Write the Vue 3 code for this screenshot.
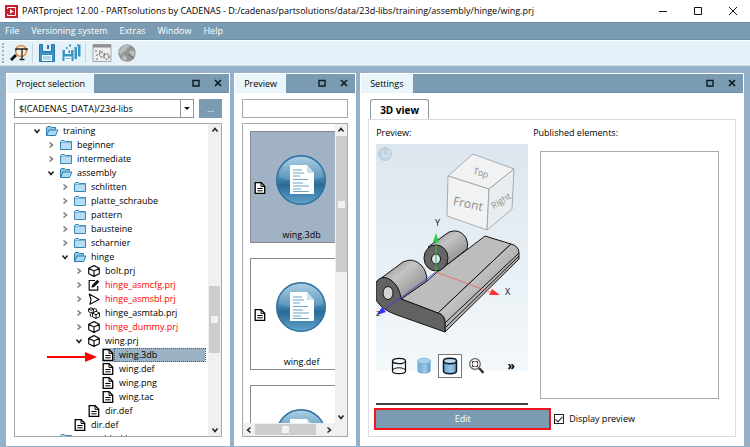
<script setup>
import { ref } from 'vue'

const menus = ['File', 'Versioning system', 'Extras', 'Window', 'Help']
const library = ref('$(CADENAS_DATA)/23d-libs')
const filter = ref('')
const showPreview = ref(true)

const rows = [
  { level: 0, icon: 'open', state: 'open', text: 'training' },
  { level: 1, icon: 'folder', state: 'closed', text: 'beginner' },
  { level: 1, icon: 'folder', state: 'closed', text: 'intermediate' },
  { level: 1, icon: 'open', state: 'open', text: 'assembly' },
  { level: 2, icon: 'folder', state: 'closed', text: 'schlitten' },
  { level: 2, icon: 'folder', state: 'closed', text: 'platte_schraube' },
  { level: 2, icon: 'folder', state: 'closed', text: 'pattern' },
  { level: 2, icon: 'folder', state: 'closed', text: 'bausteine' },
  { level: 2, icon: 'folder', state: 'closed', text: 'scharnier' },
  { level: 2, icon: 'open', state: 'open', text: 'hinge' },
  { level: 3, icon: 'cube', state: 'closed', text: 'bolt.prj' },
  { level: 3, icon: 'edit', state: 'closed', text: 'hinge_asmcfg.prj', red: true },
  { level: 3, icon: 'play', state: 'closed', text: 'hinge_asmsbl.prj', red: true },
  { level: 3, icon: 'cubes', state: 'closed', text: 'hinge_asmtab.prj' },
  { level: 3, icon: 'cube', state: 'closed', text: 'hinge_dummy.prj', red: true },
  { level: 3, icon: 'cube', state: 'open', text: 'wing.prj' },
  { level: 4, icon: 'file', text: 'wing.3db', selected: true },
  { level: 4, icon: 'file', text: 'wing.def' },
  { level: 4, icon: 'file', text: 'wing.png' },
  { level: 4, icon: 'file', text: 'wing.tac' },
  { level: 3, icon: 'file', text: 'dir.def' },
  { level: 2, icon: 'file', text: 'dir.def' },
  { level: 1, icon: 'folder', state: 'closed', text: 'assembly_kb' }
]

const files = [
  { name: 'wing.3db', selected: true },
  { name: 'wing.def' },
  { name: '' }
]
</script>

<template>
  <svg class="sprite" aria-hidden="true">
    <defs>
      <linearGradient id="ball" x1="0" y1="0" x2="0" y2="1">
        <stop offset="0" stop-color="#a3cbe2" />
        <stop offset=".45" stop-color="#4b8bb4" />
        <stop offset=".6" stop-color="#2c6a98" />
        <stop offset="1" stop-color="#5fa5cd" />
      </linearGradient>
      <linearGradient id="blueCyl" x1="0" y1="0" x2="1" y2="0">
        <stop offset="0" stop-color="#6aa5cf" />
        <stop offset=".6" stop-color="#9cc9e8" />
        <stop offset="1" stop-color="#5d97c0" />
      </linearGradient>
      <linearGradient id="steel" x1="0" y1="0" x2="1" y2="1">
        <stop offset="0" stop-color="#828282" />
        <stop offset=".4" stop-color="#c4c4c4" />
        <stop offset="1" stop-color="#7c7c7c" />
      </linearGradient>
      <symbol id="folder" viewBox="0 0 12 12">
        <path d="M.5 10.5v-8l1-1h3l1 1h6v8z" fill="#b5dcf2" stroke="#3a86b4" />
        <path d="M1 3.500h10" stroke="#7bb6d8" />
      </symbol>
      <symbol id="open" viewBox="0 0 12 12">
        <path d="M.5 10.500v-8l1-1h3l1 1h4v2" fill="#8cc5e5" stroke="#2b7caf" />
        <path d="M.5 10.500 3 5h9l-2.500 5.500z" fill="#a9d9f3" stroke="#2b7caf" />
      </symbol>
      <symbol id="cube" viewBox="0 0 12 12">
        <path d="M6 .6 11.300 3.200v5.600L6 11.400.7 8.800V3.200zM.7 3.200 6 6l5.300-2.800M6 6v5.400" fill="#fff" stroke="#111" stroke-width="1.2" stroke-linejoin="round" />
      </symbol>
      <symbol id="cubes" viewBox="0 0 12 12">
        <path d="M3 .7 5.500 2v2.700L3 6 .6 4.700V2zM.6 2 3 3.300 5.500 2" fill="#fff" stroke="#111" />
        <path d="M3.500 6.500 2 7.500l1 2.300M6 1.500l2.500.8v1.500" fill="none" stroke="#111" />
        <path d="M8 4.200 11.500 6v3.700L8 11.500 4.500 9.700V6zM4.500 6 8 7.800 11.500 6M8 7.800v3.700" fill="#fff" stroke="#111" />
      </symbol>
      <symbol id="edit" viewBox="0 0 12 12">
        <path d="M7 1.500H1.200v9.700h8.500V7" fill="#fff" stroke="#111" stroke-width="1.200" />
        <path d="m3.500 8.800.6-2.800L9.300.7l2.100 2L6.200 8z" fill="#111" />
      </symbol>
      <symbol id="play" viewBox="0 0 12 12">
        <path d="M1.200 1 11 6.500l-9 4.700 1-4.700z" fill="#fff" stroke="#111" stroke-width="1.200" stroke-linejoin="round" />
      </symbol>
      <symbol id="file" viewBox="0 0 12 12">
        <path d="M1.200.7h6l3.500 3.500v7.100H1.200z" fill="#fff" stroke="#000" stroke-width="1.300" />
        <path d="M7 .7v3.700h3.700M3.300 6.500h5.300M3.300 8.800h5.300" fill="none" stroke="#000" />
      </symbol>
      <symbol id="max" viewBox="0 0 8 8">
        <path d="M1 1.500h6V7H1z" fill="none" stroke="#0d1b25" stroke-width="1.400" />
      </symbol>
      <symbol id="x" viewBox="0 0 8 8">
        <path d="m1 1 6 6M7 1 1 7" stroke="#0d1b25" stroke-width="1.700" />
      </symbol>
      <symbol id="chev" viewBox="0 0 8 8">
        <path d="m1.500 2.500 2.500 3 2.500-3" fill="none" stroke="#222" stroke-width="1.500" />
      </symbol>
      <symbol id="badge" viewBox="0 0 50 50">
        <circle cx="25" cy="25" r="24.300" fill="url(#ball)" stroke="#2d6f9e" stroke-width="1.400" />
        <path d="M3 22a22 20 0 0 1 44 0q-22 9-44 0" fill="#fff" opacity=".13" />
        <path d="M14 10h17l7 8v21H14z" fill="#fdfeff" />
        <path d="M31 10v8h7z" fill="#cfe1ed" />
        <path d="M17 15h9M17 18h11M17 21h7M17 24.500h15M17 28h10M17 31h16M17 34h8M17 36.500h16" stroke="#6fa3c4" stroke-width="1" />
      </symbol>
      <symbol id="floppy" viewBox="0 0 16 18">
        <path d="M.5.5h3v7h9v-7h3v17H.5z" fill="#3c93c6" stroke="#2377a9" />
        <path d="M4 0h8v6.500H4z" fill="#dff0f9" />
        <path d="M8 1h2v4H8z" fill="#2377a9" />
        <path d="M3 11h10v6H3z" fill="#f3fafd" />
        <path d="M4 13h8M4 15h8" stroke="#7ab4d6" />
      </symbol>
    </defs>
  </svg>

  <div class="app">
    <header class="title">
      <svg class="logo" viewBox="0 0 13 13">
        <path d="M0 0h13v13H0z" fill="#c6202e" />
        <path d="M2.500 4V2.500h8v8h-8V9" fill="none" stroke="#fff" />
        <path d="M5 4.300 8.800 6.500 5 8.800z" fill="#fff" />
      </svg>
      <h1>PARTproject 12.00 - PARTsolutions by CADENAS - D:/cadenas/partsolutions/data/23d-libs/training/assembly/hinge/wing.prj</h1>
      <div class="winbtns">
        <button aria-label="Minimize"><svg viewBox="0 0 10 10"><path d="M1 5.500h8" stroke="#111" /></svg></button>
        <button aria-label="Maximize"><svg viewBox="0 0 10 10"><path d="M1.500 1.500h7v7h-7z" fill="none" stroke="#111" /></svg></button>
        <button aria-label="Close window"><svg viewBox="0 0 10 10"><path d="m1 1 8 8M9 1 1 9" stroke="#111" /></svg></button>
      </div>
    </header>

    <nav class="menu">
      <button v-for="m in menus" :key="m">{{ m }}</button>
    </nav>

    <div class="tools">
      <span class="grip"></span>
      <button aria-label="Search">
        <svg viewBox="0 0 18 18">
          <path d="m6 11-5 5" stroke="#111" stroke-width="3" />
          <circle cx="11" cy="7" r="5.500" fill="#f6ede2" stroke="#dd8f4b" stroke-width="1.500" />
          <path d="M6 6.500V5h11v1.500M12 5.500v10M9.500 15.500h5" fill="none" stroke="#222" stroke-width="1.300" />
        </svg>
      </button>
      <i class="sep"></i>
      <button class="slim" aria-label="Save"><svg viewBox="0 0 16 18"><use href="#floppy" /></svg></button>
      <button class="wide" aria-label="Save all">
        <svg viewBox="0 0 20 18">
          <path d="M8 .5h2v3h6v-3h3.500v12H8z" fill="#3c93c6" />
          <path d="M10 .5h6v3h-6z" fill="#dff0f9" />
          <path d="M4.500 2.500h2.500v3h6v-3h3.500v13h-12z" fill="#3c93c6" stroke="#e5f2f9" />
          <path d="M7.500 2.500h5v3h-5z" fill="#dff0f9" />
          <path d="M1 5.500h12v12H1z" fill="#3c93c6" stroke="#e5f2f9" />
          <path d="M4 6h6v4H4zM3.500 12.500h7V17h-7z" fill="#f3fafd" />
          <path d="M7.500 6.500h1.500v2.500H7.500z" fill="#2377a9" />
          <path d="M4.500 14.500h5" stroke="#7ab4d6" />
        </svg>
      </button>
      <i class="sep"></i>
      <button class="wide" aria-label="Tools">
        <svg viewBox="0 0 20 18">
          <path d="M1 .5h18v17H1z" fill="#eceeef" stroke="#a7a9aa" />
          <path d="M1 2h18" stroke="#8d8f90" stroke-width="3" />
          <path d="M3 7h2M4 12l2-2M4 15h2M8 6v3" stroke="#777" />
          <circle cx="10" cy="10.500" r="2.400" fill="none" stroke="#888" stroke-width="1.500" stroke-dasharray="2 1" />
          <circle cx="14.500" cy="12.500" r="2.600" fill="none" stroke="#888" stroke-width="1.500" stroke-dasharray="2 1" />
        </svg>
      </button>
      <button aria-label="Online">
        <svg viewBox="0 0 18 18">
          <circle cx="9" cy="9" r="8.700" fill="#939596" />
          <path d="M5 1.300 9 .5l3 2-3 1.500-1 3-3 1-2 3L.8 8zM12 6l4 1 1 3-3 5-3-4zM5 11l4 2-1 4-4-2z" fill="#b9bbbc" />
          <path d="M11 10q1.500 3 5 4" fill="none" stroke="#777" stroke-width="2" />
        </svg>
      </button>
    </div>

    <main class="desk">
      <section class="panel project">
        <div class="bar">
          <h2>Project selection</h2>
          <button aria-label="Float project selection"><svg><use href="#max" /></svg></button>
          <button aria-label="Close project selection"><svg><use href="#x" /></svg></button>
        </div>
        <div class="body">
          <div class="lib">
            <div class="combo">
              <select v-model="library" aria-label="Library"><option>$(CADENAS_DATA)/23d-libs</option></select>
              <span class="drop"></span>
            </div>
            <button class="more" aria-label="Browse">...</button>
          </div>
          <div class="box tree">
            <ul>
              <li v-for="(r, i) in rows" :key="i" :class="['l' + r.level, { red: r.red }]">
                <span class="tw"><svg v-if="r.state" :class="r.state"><use href="#chev" /></svg></span>
                <span class="node" :class="{ sel: r.selected }">
                  <svg class="ic"><use :href="'#' + r.icon" /></svg>
                  <span class="name">{{ r.text }}</span>
                </span>
                <svg v-if="r.selected" class="pointer" viewBox="0 0 50 12">
                  <path d="M0 6h40" stroke="#f00" stroke-width="2" />
                  <path d="m38 1 12 5-12 5z" fill="#f00" />
                </svg>
              </li>
            </ul>
            <div class="vbar">
              <svg class="up"><use href="#chev" /></svg>
              <span class="before"></span>
              <span class="thumb"></span>
              <span class="after"></span>
              <svg><use href="#chev" /></svg>
            </div>
          </div>
        </div>
      </section>

      <section class="panel files">
        <div class="bar">
          <h2>Preview</h2>
          <button aria-label="Float preview"><svg><use href="#max" /></svg></button>
          <button aria-label="Close preview"><svg><use href="#x" /></svg></button>
        </div>
        <div class="body">
          <input v-model="filter" class="filter" type="text" aria-label="Filter">
          <div class="box list">
            <div class="cards">
              <figure v-for="(f, i) in files" :key="i" :class="{ on: f.selected }">
                <svg class="ic"><use href="#file" /></svg>
                <svg class="ball"><use href="#badge" /></svg>
                <figcaption>{{ f.name }}</figcaption>
              </figure>
            </div>
            <div class="vbar">
              <svg class="up"><use href="#chev" /></svg>
              <span class="thumb"></span>
              <span class="after"></span>
              <svg><use href="#chev" /></svg>
            </div>
            <div class="hbar">
              <svg class="left"><use href="#chev" /></svg>
              <span class="thumb"></span>
              <span class="after"></span>
              <svg class="right"><use href="#chev" /></svg>
            </div>
          </div>
        </div>
      </section>

      <section class="panel settings">
        <div class="bar">
          <h2>Settings</h2>
          <button aria-label="Float settings"><svg><use href="#max" /></svg></button>
          <button aria-label="Close settings"><svg><use href="#x" /></svg></button>
        </div>
        <div class="body">
          <button class="tab">3D view</button>
          <div class="pane">
            <div class="left-col">
              <p>Preview:</p>
              <div class="view">
                <svg class="scene" viewBox="0 0 152 200">
                  <circle cx="9" cy="10" r="6.500" fill="#cfdde8" stroke="#b3c9d9" />
                  <path d="M13 7a5 5 0 1 0 0 6M9 6v4h4" fill="none" stroke="#b3c9d9" />
                  <g stroke="#9b9b9b" stroke-linejoin="round" stroke-width=".8">
                    <path d="m97 10 41 15-25 20-41-13z" fill="#f0f2f3" />
                    <path d="m72 32 41 13-2 41-40-14z" fill="#f0f2f3" />
                    <path d="m113 45 25-20-2 40-25 21z" fill="#e9edf0" />
                  </g>
                  <g class="face" text-anchor="middle" fill="#8d8d8d">
                    <text x="92" y="64" transform="rotate(12 92 60)">Front</text>
                    <text class="s" x="125" y="60" transform="rotate(-32 125 57)">Right</text>
                    <text class="s" x="105" y="32" transform="rotate(18 105 29)">Top</text>
                  </g>
                  <g stroke="#141414" stroke-linejoin="round" stroke-width="1">
                    <path d="M25 155 51 137 60 129 72 120 92 105 109 92 135 100 62 169z" fill="#bdbdbd" />
                    <path d="M135 100q8 2 8 9v6L69 188v-9q0-8-7-10z" fill="url(#steel)" />
                    <path d="m69 179 74-70M70 183l73-71" fill="none" />
                    <path d="M52 103 73 88q11-4 17 6 3 6 1 11L72 120z" fill="url(#steel)" />
                    <ellipse cx="60" cy="114" rx="12" ry="13" fill="#666" />
                    <ellipse cx="60" cy="115" rx="4.500" ry="5" fill="#dce4ea" />
                    <path d="M4 135 27 118q10-5 18 3 6 6 6 16L25 155z" fill="url(#steel)" />
                    <path d="M0 138q6-8 15-2 9 7 10 19l37 14q7 2 7 10v9L21 171Q6 166 0 156z" fill="#626262" />
                    <ellipse cx="12" cy="149" rx="5" ry="6.500" fill="#d4d4d4" />
                  </g>
                  <path d="M60 128V98" stroke="#30c040" />
                  <path d="m60 89 3 9h-6z" fill="#20d040" />
                  <path d="m60 128 54 20" stroke="#e66" stroke-width=".8" />
                  <path d="m124 151-11 0 3-6z" fill="#f33" />
                  <path d="M60 128 9 165" stroke="#33d" stroke-width=".8" />
                  <path d="m1 171 5-8 4 5z" fill="#33f" />
                  <g class="axis"><text x="59" y="82">Y</text><text x="129" y="151">X</text><text x="0" y="172">z</text></g>
                </svg>
                <div class="modes">
                  <button aria-label="Wireframe"><svg viewBox="0 0 16 18"><path d="M1.500 4v10a6.500 2.700 0 0 0 13 0V4" fill="none" stroke="#111" stroke-width="1.200" /><ellipse cx="8" cy="4" rx="6.500" ry="2.700" fill="none" stroke="#111" stroke-width="1.200" /><path d="M1.500 13.500a6.500 2.700 0 0 1 13 0" fill="none" stroke="#111" /></svg></button>
                  <button aria-label="Shaded"><svg viewBox="0 0 16 18"><path d="M1.500 4v10a6.500 2.700 0 0 0 13 0V4" fill="url(#blueCyl)" /><ellipse cx="8" cy="4" rx="6.500" ry="2.700" fill="#a9d0ea" stroke="#72a9cf" stroke-width=".7" /></svg></button>
                  <button class="active" aria-label="Shaded with edges"><svg viewBox="0 0 16 18"><path d="M1.500 4v10a6.500 2.700 0 0 0 13 0V4" fill="url(#blueCyl)" stroke="#0b1a26" stroke-width="1.500" /><ellipse cx="8" cy="4" rx="6.500" ry="2.700" fill="#b9dcf2" stroke="#0b1a26" stroke-width="1.500" /></svg></button>
                  <button aria-label="Zoom to fit"><svg viewBox="0 0 16 18"><circle cx="7" cy="7" r="5.300" fill="#f4f4f4" stroke="#666" stroke-width="1.200" /><path d="m11 11 4.500 5" stroke="#333" stroke-width="2.500" /><path d="M4.500 6.500v-2h2M9.500 6.500v-2h-2M4.500 7.500v2h2M9.500 7.500v2h-2" fill="none" stroke="#333" /></svg></button>
                  <button class="chevrons" aria-label="More">»</button>
                </div>
              </div>
            </div>
            <div class="right-col">
              <p>Published elements:</p>
              <div class="published"></div>
            </div>
            <button class="edit">Edit</button>
            <label class="check"><input v-model="showPreview" type="checkbox">Display preview</label>
          </div>
        </div>
      </section>
    </main>
  </div>
</template>

<style>
body { margin: 0; overflow: hidden; }
</style>

<style scoped>
* { box-sizing: border-box; }
.sprite { position: absolute; width: 0; height: 0; }
.app {
  display: flex; flex-direction: column; height: 100vh;
  background: #95b1c9; color: #000;
  font: 9px/14px "Open Sans", "Noto Sans", sans-serif;
}
button, input, select { font: inherit; color: inherit; }
button { display: flex; align-items: center; justify-content: center; border: 0; padding: 0; background: none; }
svg { display: block; }
h1, h2, p, ul, figure { margin: 0; padding: 0; font: inherit; }

.title { display: flex; align-items: center; gap: 4px; height: 22px; padding-left: 5px; background: #fff; flex: none; }
.title h1 { flex: 1; white-space: nowrap; }
.logo { width: 13px; height: 13px; }
.winbtns { display: flex; padding-right: 12px; gap: 25px; }
.winbtns svg { width: 10px; height: 10px; }

.menu { display: flex; gap: 12px; height: 18px; padding: 0 5px; background: #7a9bb1; color: #fff; border-top: 1px solid #6d91aa; border-bottom: 1px solid #6d91aa; flex: none; }

.tools { display: flex; align-items: center; gap: 6px; height: 26px; padding-left: 2px; background: #e5f2f9; border-top: 1px solid #fff; border-bottom: 1px solid #d3dde1; flex: none; }
.tools svg { width: 18px; height: 18px; }
.tools .wide svg { width: 20px; }
.tools .slim svg { width: 16px; }
.grip { height: 20px; border-left: 2px dotted #a9b5bc; }
.sep { width: 1px; height: 20px; margin-left: -2px; background: #ccd8df; }

.desk { flex: 1; display: flex; gap: 4px; min-height: 0; padding: 7px 6px 1px; }
.panel { display: flex; flex-direction: column; background: #fff; border: 1px solid #fff; min-width: 0; }
.project { flex: 224 1 0; }
.files { flex: 121 1 0; }
.settings { flex: 385 1 0; }
.bar { display: flex; align-items: center; gap: 14px; height: 19px; padding-right: 7px; background: #7a9bb1; flex: none; border-bottom: 1px solid #6d91aa; }
.bar h2 { height: 19px; padding: 3px 9px 2px; margin-right: auto; background: #e9f5fb; white-space: nowrap; }
.bar svg { width: 8px; height: 8px; }
.body { flex: 1; display: flex; flex-direction: column; gap: 5px; min-height: 0; padding: 6px 7px 8px; }
.box { flex: 1; min-height: 0; border: 1px solid #a5a9ac; overflow: hidden; }

.lib { display: flex; gap: 5px; height: 19px; flex: none; }
.combo { flex: 1; display: grid; grid-template-columns: 1fr 13px; border: 1px solid #8e9499; min-width: 0; }
.combo select { grid-area: 1 / 1 / 2 / 3; appearance: none; border: 0; padding: 0 4px; background: none; }
.drop { grid-area: 1 / 2; border-left: 1px solid #8e9499; display: flex; align-items: center; justify-content: center; pointer-events: none; }
.drop::after { content: ""; border: 3px solid transparent; border-top-color: #111; border-bottom: 0; }
.more { width: 23px; background: #7a9bb1; color: #fff; }

.tree { display: flex; }
ul { flex: 1; min-width: 0; list-style: none; }
li { display: flex; height: 14px; padding-left: 18px; padding-right: 3px; }
.l1 { padding-left: 32px; }
.l2 { padding-left: 46px; }
.l3 { padding-left: 60px; }
.l4 { padding-left: 74px; position: relative; }
.red { color: #f00; }
.tw { width: 13px; flex: none; display: flex; align-items: center; }
.tw svg { width: 8px; height: 8px; }
.tw .closed { transform: rotate(-90deg); opacity: .6; }
.node { flex: 1; display: flex; align-items: center; }
.ic { width: 12px; height: 12px; flex: none; }
.name { flex: 1; padding-left: 4px; white-space: nowrap; margin-left: 1px; line-height: 12px; }
.sel { background: #9bb3c5; }
.sel .name { outline: 1px dotted #45606f; }
.pointer { position: absolute; left: 32px; top: 3px; width: 50px; height: 12px; }

.vbar { display: flex; flex-direction: column; align-items: center; width: 13px; background: #f0f0f0; }
.vbar svg, .hbar svg { width: 8px; height: 8px; margin: 2px; flex: none; }
.up { transform: rotate(180deg); }
.left { transform: rotate(90deg); }
.right { transform: rotate(-90deg); }
.thumb { display: flex; align-items: center; justify-content: center; background: #cdcdcd; }
.thumb::after { content: ""; width: 7px; height: 7px; background: #f2f2f2; }
.vbar .thumb { width: 11px; flex: 67; }
.before { flex: 151; }
.after { flex: 71; }

.filter { width: 100%; height: 19px; border: 1px solid #a5a9ac; padding: 0 4px; flex: none; }
.list { display: grid; grid-template: 1fr 13px / 1fr 12px; }
.cards { display: flex; flex-direction: column; gap: 15px; padding: 7px 0 0 7px; overflow: hidden; min-height: 0; }
figure { display: grid; grid-template: 96px 14px / 12px 1fr; height: 112px; padding-left: 3px; border: 1px solid #85898d; border-right: 0; flex: none; align-items: center; }
figure .ic { margin-top: 15px; }
figure.on { background: #a0b2c3; }
.ball { width: 50px; height: 50px; margin-left: 10px; }
figcaption { grid-column: 1 / 3; text-align: center; padding-left: 14px; }
.list .vbar .thumb { flex: 136; }
.list .vbar .after { flex: 139; }
.hbar { grid-column: 1 / 3; display: flex; align-items: center; background: #f0f0f0; padding-right: 12px; }
.hbar .thumb { flex: 59; height: 11px; }
.hbar .after { flex: 7; }
.list .vbar { width: 12px; }

.settings .body { gap: 0; }
.tab { align-self: flex-start; height: 20px; margin-left: 2px; padding: 0 9px; border: 1px solid #8f979c; border-bottom: 0; border-radius: 3px 3px 0 0; font-size: 10px; font-weight: 700; }
.pane { flex: 1; min-height: 0; display: grid; grid-template: 1fr 22px / 177px 1fr; column-gap: 3px; row-gap: 3px; padding: 6px 16px 6px 5px; border: 1px solid #dcdcdc; }
.left-col, .right-col { display: flex; flex-direction: column; min-height: 0; }
.left-col { padding: 0 23px 0 2px; }
.left-col p { margin-bottom: 4px; }
.right-col { margin-left: -21px; }
.right-col p { margin-bottom: 11px; }
.view { flex: 1; display: flex; flex-direction: column; justify-content: space-between; min-height: 0; background: linear-gradient(#dce6ee, #f3f8fb 226px, #fff 227px); border-bottom: 2px solid #444; }
.scene { width: 100%; height: 200px; }
.face { font-size: 12px; }
.s { font-size: 9px; }
.axis { font-size: 9px; fill: #111; }
.modes { display: flex; align-items: center; gap: 3px; padding-left: 12px; margin-bottom: 25px; }
.modes button { width: 22px; height: 24px; flex: none; }
.modes .active { width: 24px; border: 1px solid #777; background: #fff; }
.modes svg { width: 16px; height: 18px; }
.modes .chevrons { margin-left: 10px; font-weight: 700; font-size: 12px; }
.published { flex: 1; margin-left: 7px; margin-bottom: 6px; border: 1px solid #a8abad; }
.edit { border: 2px solid #f0141c; background: #7a9bb1; color: #fff; }
.check { display: flex; align-items: center; gap: 5px; }
.check input { appearance: none; width: 10px; height: 10px; margin: 0; border: 1px solid #222; display: flex; justify-content: center; }
.check input:checked::after { content: ""; width: 3px; height: 6px; border: solid #222; border-width: 0 1px 1px 0; transform: rotate(42deg); }
</style>
